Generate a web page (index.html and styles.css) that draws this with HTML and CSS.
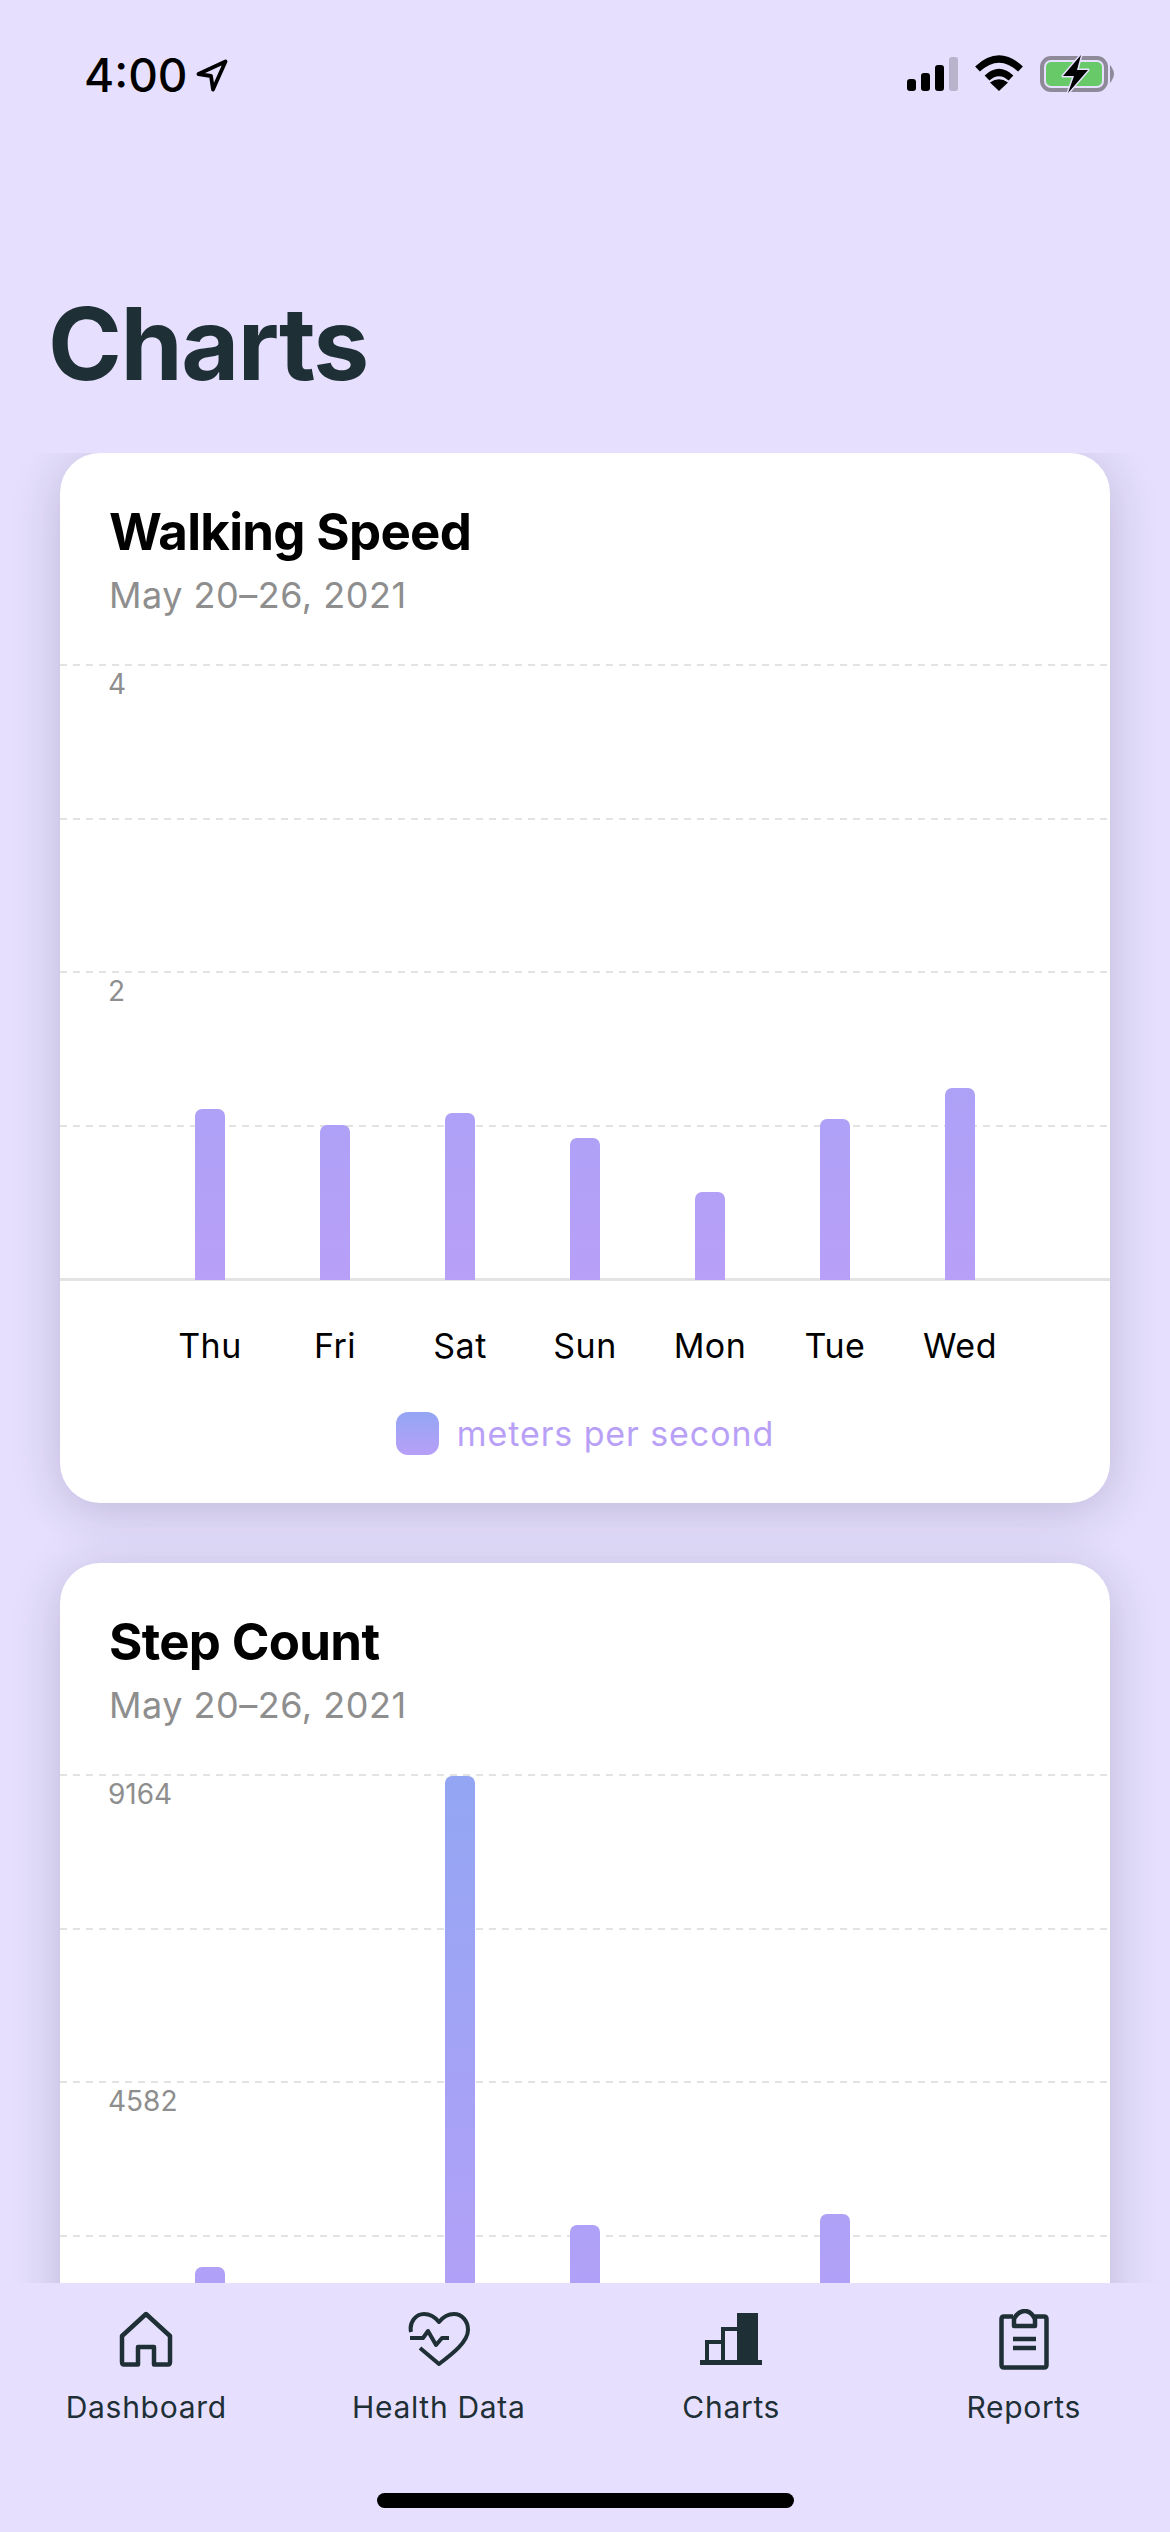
FILE: index.html
```html
<!DOCTYPE html>
<html>

<head>
  <title>Charts</title>
  <link rel="stylesheet" href="styles.css">
</head>

<body>
  <div class="status">
    <div class="status-left">
      <span class="time">4:00</span>
      <svg class="arrow" width="32" height="33" viewBox="0 0 32 33"><path d="M2.500 15 L29.500 2.500 L17 30.500 L15 17 Z" fill="none" stroke="#000" stroke-width="3.800" stroke-linejoin="round"/></svg>
    </div>
    <svg class="status-right" width="215" height="40" viewBox="0 0 215 40">
      <!-- signal -->
      <rect x="2" y="24" width="9" height="12" rx="3" fill="#000"/>
      <rect x="16" y="18" width="9" height="18" rx="3" fill="#000"/>
      <rect x="30" y="10" width="9" height="26" rx="3" fill="#000"/>
      <rect x="44" y="2" width="9" height="34" rx="3" fill="#b9b4cc"/>
      <!-- wifi -->
      <path d="M72.500 14 Q94 -6 115.500 14" fill="none" stroke="#000" stroke-width="7"/>
      <path d="M82 23 Q94 12 106 23" fill="none" stroke="#000" stroke-width="7"/>
      <path d="M94 36 L85 27.500 Q94 21 103 27.500 Z" fill="#000"/>
      <!-- battery -->
      <rect x="137" y="3" width="64" height="32" rx="9" fill="none" stroke="#8e8a9a" stroke-width="4"/>
      <rect x="141" y="7" width="56" height="24" rx="5" fill="#68c969"/>
      <path d="M206 13 Q210 19 206 25 Z" fill="#8e8a9a" stroke="#8e8a9a" stroke-width="2"/>
      <path d="M176 0 L158 21 L169 21 L163 38 L183 15 L172 15 Z" fill="#000" stroke="#e6e0fe" stroke-width="3" stroke-linejoin="round" paint-order="stroke"/>
    </svg>
  </div>

  <h1 class="page-title">Charts</h1>

  <div class="scroll">
    <div class="card">
      <h2 class="card-title">Walking Speed</h2>
      <p class="card-date">May 20–26, 2021</p>
      <div class="plot">
        <div class="grid-row">4</div>
        <div class="grid-row"></div>
        <div class="grid-row">2</div>
        <div class="grid-row"></div>
        <div class="bars">
          <div class="cell"><div class="bar" style="height: 171px"></div></div>
          <div class="cell"><div class="bar" style="height: 155px"></div></div>
          <div class="cell"><div class="bar" style="height: 167px"></div></div>
          <div class="cell"><div class="bar" style="height: 142px"></div></div>
          <div class="cell"><div class="bar" style="height: 88px"></div></div>
          <div class="cell"><div class="bar" style="height: 161px"></div></div>
          <div class="cell"><div class="bar" style="height: 192px"></div></div>
        </div>
      </div>
      <div class="days">
        <span>Thu</span><span>Fri</span><span>Sat</span><span>Sun</span><span>Mon</span><span>Tue</span><span>Wed</span>
      </div>
      <div class="legend">
        <div class="swatch"></div>
        <span>meters per second</span>
      </div>
    </div>

    <div class="card">
      <h2 class="card-title">Step Count</h2>
      <p class="card-date">May 20–26, 2021</p>
      <div class="plot">
        <div class="grid-row">9164</div>
        <div class="grid-row"></div>
        <div class="grid-row">4582</div>
        <div class="grid-row"></div>
        <div class="bars">
          <div class="cell"><div class="bar" style="height: 123px"></div></div>
          <div class="cell"></div>
          <div class="cell"><div class="bar" style="height: 614px"></div></div>
          <div class="cell"><div class="bar" style="height: 165px"></div></div>
          <div class="cell"></div>
          <div class="cell"><div class="bar" style="height: 176px"></div></div>
          <div class="cell"></div>
        </div>
      </div>
    </div>
  </div>

  <div class="tab-bar">
    <div class="tabs">
      <div class="tab">
        <div class="tab-icon">
          <svg width="54" height="56" viewBox="0 0 54 56" fill="none" stroke="#1f2f36" stroke-width="4.500" stroke-linejoin="round">
            <path d="M19 53.500 H5 Q3 53.500 3 51 V25 L27 3 L51 25 V51 Q51 53.500 49 53.500 H35 V36 H19 Z"/>
          </svg>
        </div>
        <span>Dashboard</span>
      </div>
      <div class="tab">
        <div class="tab-icon">
          <svg width="62" height="54" viewBox="0 0 62 54" fill="none" stroke="#1f2f36" stroke-width="4" stroke-linejoin="round">
            <path d="M3 20 C1 10 8 2 16 2 C22 2 27 5 31 10 C35 5 40 2 46 2 C54 2 60 9 60 18 C60 30 44 42 31 52 L12 36"/>
            <path d="M2 26 H15 L20 19 L28 33 L34 26 H41"/>
          </svg>
        </div>
        <span>Health Data</span>
      </div>
      <div class="tab">
        <div class="tab-icon">
          <svg width="62" height="52" viewBox="0 0 62 52" fill="none" stroke="#1f2f36" stroke-width="4">
            <rect x="7" y="29" width="16" height="20"/>
            <rect x="23" y="16" width="16" height="33"/>
            <rect x="37" y="0" width="21" height="50" fill="#1f2f36" stroke="none"/>
            <path d="M0 49.500 H62" stroke-width="5"/>
          </svg>
        </div>
        <span>Charts</span>
      </div>
      <div class="tab">
        <div class="tab-icon">
          <svg width="50" height="61" viewBox="0 0 50 61" fill="none" stroke="#1f2f36" stroke-width="4.500" stroke-linejoin="round">
            <path d="M14 7.500 H5 Q2.500 7.500 2.500 10 V56 Q2.500 58.500 5 58.500 H45 Q47.500 58.500 47.500 56 V10 Q47.500 7.500 45 7.500 H36"/>
            <path d="M15 17 H36 V10 C33 4 30 2 26 2 C21 2 18 4 15 10 Z"/>
            <path d="M14 30 H37 M14 39 H37"/>
          </svg>
        </div>
        <span>Reports</span>
      </div>
    </div>
    <div class="home-bar"></div>
  </div>
</body>

</html>
```

FILE: styles.css
```css
* {
  box-sizing: border-box;
}

body {
  margin: 0;
  width: 1170px;
  height: 2532px;
  overflow: hidden;
  display: flex;
  flex-direction: column;
  background-color: #e6e0fe;
  font-family: "Inter", "Liberation Sans", sans-serif;
}

.status {
  height: 284px;
  flex-shrink: 0;
  display: flex;
  justify-content: space-between;
  align-items: flex-start;
  padding: 52px 50px 0 84px;
}

.status-left {
  display: flex;
  align-items: center;
  gap: 8px;
}

.status-right {
  margin-top: 3px;
}

.time {
  font-size: 46px;
  line-height: 46px;
  font-weight: 500;
  color: #000;
}

.page-title {
  margin: 0 0 49px 48px;
  font-size: 100px;
  line-height: 120px;
  font-weight: 700;
  letter-spacing: -1.500px;
  color: #1f2f36;
}

/* cards get cut off by the tab bar */
.scroll {
  flex: 1;
  min-height: 0;
  overflow: hidden;
  padding: 0 60px;
}

.card {
  height: 1050px;
  margin-bottom: 60px;
  padding-top: 48px;
  background-color: #fff;
  border-radius: 40px;
  box-shadow: 0 8px 50px rgba(30, 20, 60, 0.2);
}

.card-title {
  margin: 0 0 10px 49px;
  font-size: 51px;
  line-height: 62px;
  font-weight: 700;
  letter-spacing: -0.700px;
  color: #000;
}

.card-date {
  margin: 0 0 47px 49px;
  font-size: 36px;
  line-height: 44px;
  letter-spacing: 0.500px;
  color: #8e8e8e;
}

.plot {
  position: relative;
  height: 617px;
  display: flex;
  flex-direction: column;
  border-bottom: 3px solid #e3e3e3;
}

.grid-row {
  flex: 1;
  padding: 3px 0 0 48px;
  font-size: 28px;
  line-height: 34px;
  color: #8e8e8e;
  background: repeating-linear-gradient(to right, #e3e3e3 0, #e3e3e3 7px, transparent 7px, transparent 13px) top left / 100% 2px no-repeat;
}

.bars {
  position: absolute;
  left: 0;
  right: 0;
  bottom: -2px;
  display: flex;
  justify-content: center;
  align-items: flex-end;
}

.cell {
  width: 125px;
  display: flex;
  justify-content: center;
}

/* gradient spans the whole plot, so short bars only show the lower part */
.bar {
  width: 30px;
  border-radius: 7px 7px 0 0;
  background: linear-gradient(to bottom, #93a6f3, #b89ff8) bottom / 100% 614px no-repeat;
}

.days {
  display: flex;
  justify-content: center;
  margin-top: 44px;
  font-size: 34px;
  line-height: 42px;
  letter-spacing: 0.500px;
  color: #000;
}

.days span {
  width: 125px;
  text-align: center;
}

.legend {
  display: flex;
  justify-content: center;
  align-items: center;
  gap: 18px;
  margin-top: 45px;
  font-size: 34px;
  line-height: 43px;
  letter-spacing: 0.900px;
  color: #b9a0f7;
}

.swatch {
  width: 43px;
  height: 43px;
  border-radius: 12px;
  background: linear-gradient(to bottom, #93a6f3, #b89ff8);
}

.tab-bar {
  height: 249px;
  flex-shrink: 0;
  display: flex;
  flex-direction: column;
  align-items: center;
  padding-top: 24px;
  background-color: #e6e0fe;
  position: relative;
}

.tabs {
  width: 100%;
  display: grid;
  grid-template-columns: repeat(4, 1fr);
}

.tab {
  display: flex;
  flex-direction: column;
  align-items: center;
  font-size: 30px;
  line-height: 36px;
  letter-spacing: 0.700px;
  color: #1f2f36;
}

.tab-icon {
  height: 64px;
  margin-bottom: 18px;
  display: flex;
  align-items: center;
}

.tab-icon svg {
  display: block;
}

.home-bar {
  width: 417px;
  height: 15px;
  margin-top: 68px;
  border-radius: 8px;
  background-color: #000;
}
```
